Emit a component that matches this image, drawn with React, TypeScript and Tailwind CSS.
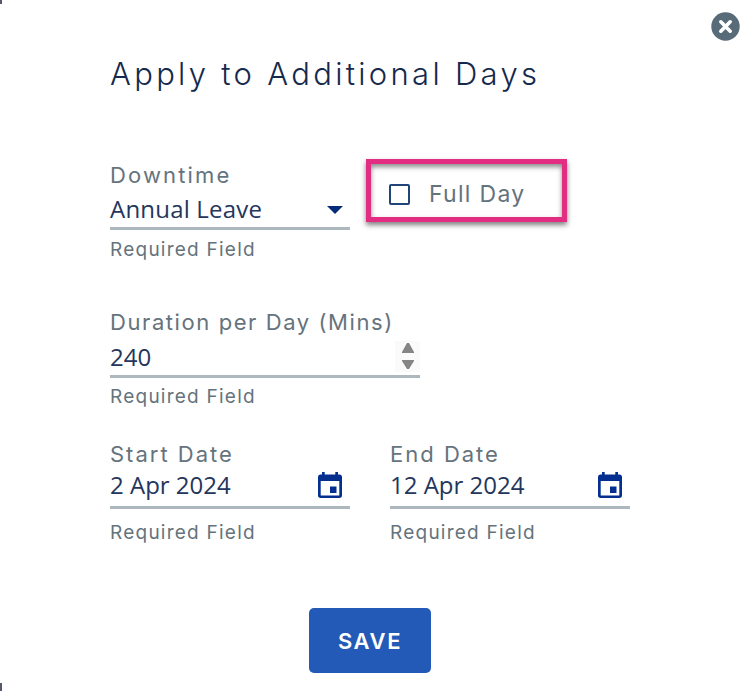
import type { ReactNode } from "react";

const labelFont = "font-['Inter','Noto_Sans',sans-serif] whitespace-nowrap text-[#65737d]";
const valueFont = "font-['Open_Sans','Noto_Sans',sans-serif] whitespace-nowrap text-[#24365c]";

function Label({ children, className }: { children: ReactNode; className: string }) {
  return <div className={`${labelFont} h-[30px] text-[22px] leading-[30px] ${className}`}>{children}</div>;
}

function Helper() {
  return <div className={`${labelFont} h-7 text-[19px] leading-7 tracking-[1.24px]`}>Required Field</div>;
}

function CalendarIcon() {
  return (
    <svg viewBox="0 0 24 26" className="mr-2 mb-[5px] h-[26px] w-6 shrink-0" fill="#052f8f">
      <path
        fillRule="evenodd"
        d="M4 0h2.7v2.5h10.6V0H20v2.5h1.3A2.7 2.7 0 0 1 24 5.2v18.1a2.7 2.7 0 0 1-2.7 2.7H2.7A2.7 2.7 0 0 1 0 23.3V5.2a2.7 2.7 0 0 1 2.7-2.7H4zM2.7 9v14.4h18.6V9z"
      />
      <path d="M12 14.5h6.5V21H12z" />
    </svg>
  );
}

function DateField({ label, value }: { label: string; value: string }) {
  return (
    <div className="w-60">
      <Label className="tracking-[2px]">{label}</Label>
      <div className="flex h-[40px] items-center justify-between border-b-[3px] border-[#adb8be]">
        <span className={`${valueFont} pb-1.5 text-[24px] leading-8`}>{value}</span>
        <CalendarIcon />
      </div>
      <div className="pt-2.5">
        <Helper />
      </div>
    </div>
  );
}

export default function App() {
  return (
    <div className="relative h-[691px] w-[746px] overflow-hidden bg-white pt-[52px] pl-[110px]">
      <div className="absolute top-0 left-0 h-1 w-0.5 bg-[#555a68]" />
      <div className="absolute bottom-0 left-0 h-2 w-0.5 bg-[#555a68]" />
      <button aria-label="Close" className="absolute top-3 left-[711px] h-[29px] w-[29px]">
        <svg viewBox="0 0 29 29" className="h-[29px] w-[29px]">
          <circle cx="14.5" cy="14.5" r="14.2" fill="#586b78" />
          <path d="m9.8 9.8 9.4 9.4m0-9.4L9.8 19.2" stroke="#fff" strokeWidth="3.6" strokeLinecap="round" />
        </svg>
      </button>

      <h1 className="h-11 font-['Inter','Noto_Sans',sans-serif] text-[31px] leading-[44px] font-[350] tracking-[3.3px] whitespace-nowrap text-[#15294d]">
        Apply to Additional Days
      </h1>

      <div className="mt-[63px] flex">
        <div className="w-60">
          <Label className="pt-px tracking-[2.15px]">Downtime</Label>
          <div className="flex h-[41px] items-center justify-between border-b-[3px] border-[#adb8be] pt-0.5">
            <span className={`${valueFont} text-[24px] leading-8 tracking-[0.2px]`}>Annual Leave</span>
            <svg viewBox="0 0 16 8" className="mt-0.5 mr-[7px] h-2 w-4" fill="#052c78">
              <path d="M0 0h16L8 8z" />
            </svg>
          </div>
          <div className="pt-1.5">
            <Helper />
          </div>
        </div>
        <label className="ml-4 flex h-[63px] w-[201px] items-center border-[5px] border-[#e32d82] bg-white pl-[18px] shadow-[0_3px_5px_rgba(0,0,0,0.5),inset_0_3px_5px_rgba(0,0,0,0.45)]">
          <span className="mt-2 h-[21px] w-[21px] rounded-[2px] border-2 border-[#214579]" />
          <span className={`${labelFont} mt-1.5 ml-[19px] text-[23px] leading-8 tracking-[1.3px]`}>Full Day</span>
        </label>
      </div>

      <div className="mt-[43px] w-[310px]">
        <Label className="tracking-[1.58px]">Duration per Day (Mins)</Label>
        <div className="flex h-[41px] items-center justify-between border-b-[3px] border-[#adb8be]">
          <span className={`${valueFont} pt-0.5 text-[24px] leading-8`}>240</span>
          <span className="flex h-[31px] w-[25px] flex-col items-center justify-center gap-[7px] bg-[#fafafa]">
            <svg viewBox="0 0 12 10" className="h-2.5 w-3" fill="#858585"><path d="M5 0h2l5 9v1H0V9z" /></svg>
            <svg viewBox="0 0 12 9" className="h-[9px] w-3" fill="#858585"><path d="M0 0h12v1L7 9H5L0 1z" /></svg>
          </span>
        </div>
        <div className="pt-[5px]">
          <Helper />
        </div>
      </div>

      <div className="mt-[28px] flex gap-10">
        <DateField label="Start Date" value="2 Apr 2024" />
        <DateField label="End Date" value="12 Apr 2024" />
      </div>

      <button className="mt-[61px] ml-[199px] flex h-[65px] w-[122px] items-center justify-center rounded-[5px] bg-[#235ab8] pt-0.5 font-['Inter','Noto_Sans',sans-serif] text-[22px] font-semibold tracking-[1.6px] text-white">
        SAVE
      </button>
    </div>
  );
}
